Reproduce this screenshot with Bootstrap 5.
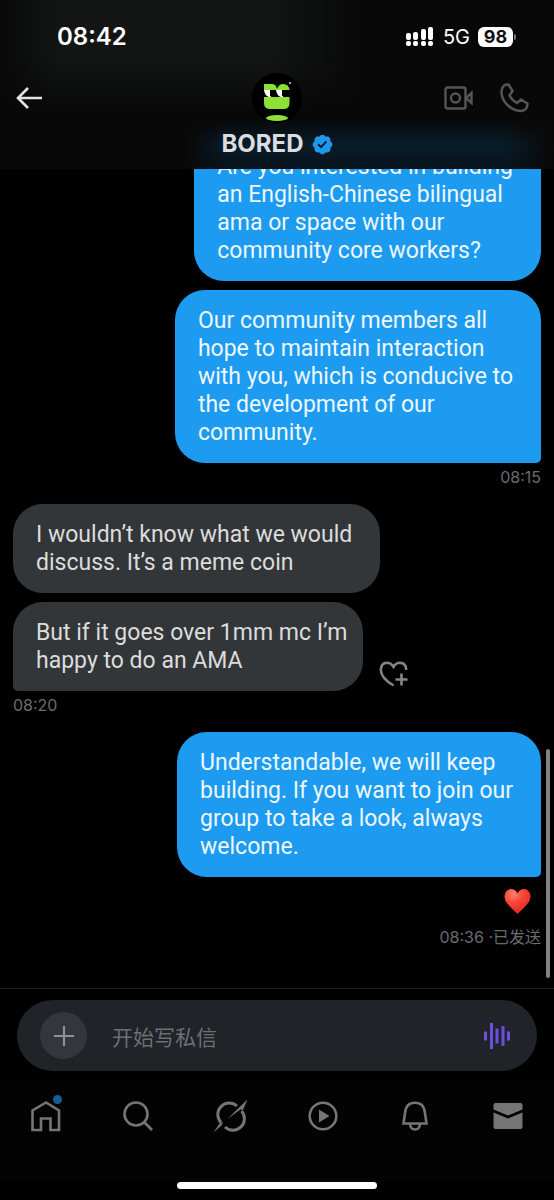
<!DOCTYPE html>
<html lang="zh-CN" data-bs-theme="dark">
<head>
<meta charset="utf-8">
<meta name="viewport" content="width=device-width, initial-scale=1">
<title>BORED</title>
<link href="https://cdn.jsdelivr.net/npm/bootstrap@5.3.0/dist/css/bootstrap.min.css" rel="stylesheet">
<style>
  body { background: #000; font-family: Roboto, "Noto Sans CJK SC", sans-serif; }
  .app { height: 100vh; }
  .icon { display: block; fill: none; stroke: currentColor; }
  .plain { border: 0; background: none; padding: 0; color: inherit; display: block; }

  .top-area {
    height: 169px;
    background:
      linear-gradient(90deg, #080808 0, transparent 60px),
      linear-gradient(270deg, #080808 190px, transparent 290px),
      linear-gradient(180deg, #131514 0, #131514 60px, #080808 110px);
  }
  .top-area::before {
    content: ""; position: absolute; left: 186px; right: 0; bottom: 0; height: 50px;
    background: linear-gradient(90deg, #080808, transparent 40px, transparent calc(100% - 50px), #080808),
      linear-gradient(180deg, #080808, #091c2a 26px, #09131b);
  }
  .status-bar { height: 74px; padding: 0 38px 0 57px; color: #fff; font-family: Inter, sans-serif; }
  .clock { font-size: 24px; font-weight: 600; line-height: 28px; }
  .network { font-size: 20px; line-height: 24px; }
  .battery { background: #fff; color: #111; border-radius: 6px; font-size: 18px; font-weight: 700; line-height: 20px; width: 35px; }
  .battery-tip { width: 2px; height: 6px; background: #777; margin-left: 1px; border-radius: 0 2px 2px 0; }
  .title-bar { height: 48px; padding: 0 16px; color: #e4e4e4; }
  .calls { color: #555; gap: 27px; }
  .calls button:last-child { margin-right: 9px; }
  .side { flex: 1 1 0; }
  .peer { font-family: Inter, sans-serif; font-size: 24px; font-weight: 700; line-height: 28px; color: #dcdde0; padding-top: 8px; }

  .chat { padding: 0 13px 41px; min-height: 0; }
  .bubble { font-size: 23px; line-height: 28px; padding: 17px 28px 16px 23px; border-radius: 30px; margin-bottom: 9px; flex-shrink: 0; }
  .sent { background: #1d9bf0; color: #edf7fe; align-self: flex-end; }
  .received { background: #333639; color: #dcdcdc; align-self: flex-start; }
  .sent-last { border-bottom-right-radius: 5px; margin-bottom: 0; }
  .received-last { border-bottom-left-radius: 5px; margin-bottom: 0; padding-right: 15px; }
  .react { color: #858585; }
  .stamp { font-family: Inter, "Noto Sans CJK SC", sans-serif; font-size: 16px; line-height: 20px; color: #696c70; margin: 4px 0 17px; flex-shrink: 0; }
  .heart { margin: 11px 10px 8px; }
  .scroll-mark { position: absolute; right: 4px; bottom: 10px; width: 4px; height: 28%; border-radius: 2px; background: #808080; }

  .composer { border-top: 1px solid #1d1f20; padding: 11px 17px 10px; }
  .pill { background: #202327; border-radius: 36px; height: 71px; padding: 0 26px 0 23px; }
  .add { width: 47px; height: 47px; border-radius: 50%; background: #33363b; color: #909295; }
  .voice { color: #6b50e0; }
  .pill input { min-width: 0; border: 0; outline: 0; background: none; color: #ddd; font-size: 21px; line-height: 28px; padding: 0; margin-left: 25px; font-family: "Noto Sans CJK SC", sans-serif; }
  .pill input::placeholder { color: #6c7074; opacity: 1; }

  .tabs { height: 101px; background: #030303; color: #757575; padding-top: 16px; }
  .tabs a { color: inherit; flex: 1 1 0; }
  .dot { position: absolute; width: 9px; height: 9px; border-radius: 50%; background: #165d90; right: 3px; top: -2px; }
  .bottom-edge { padding-bottom: 11px; }
  .home-mark { width: 36%; height: 7px; border-radius: 4px; background: #fff; }
</style>
</head>
<body>
<div class="app d-flex flex-column overflow-hidden">
  <header class="top-area position-relative flex-shrink-0">
    <div class="status-bar d-flex align-items-center justify-content-between position-relative">
      <span class="clock">08:42</span>
      <div class="d-flex align-items-center">
        <svg class="me-2" width="30" height="20" viewBox="0 0 30 20" fill="#fff" aria-hidden="true">
          <rect x="1" y="6" width="5" height="7" rx="2"/><rect x="8" y="5" width="5" height="8" rx="2"/><rect x="16" y="2" width="5" height="11" rx="2"/><rect x="23" y="0" width="5" height="13" rx="2"/>
          <rect x="1" y="14" width="5" height="5" rx="2"/><rect x="8" y="14" width="5" height="5" rx="2"/><rect x="16" y="14" width="5" height="5" rx="2"/><rect x="23" y="14" width="5" height="5" rx="2"/>
        </svg>
        <span class="network me-2">5G</span>
        <span class="battery text-center">98</span><span class="battery-tip"></span>
      </div>
    </div>
    <div class="title-bar d-flex align-items-center position-relative">
      <div class="side">
        <button class="plain" type="button" aria-label="返回">
          <svg class="icon" width="27" height="24" viewBox="0 0 27 24" stroke-width="2.6"><path d="M26 12H2.500M12 2 2 12l10 10"/></svg>
        </button>
      </div>
      <svg width="50" height="50" viewBox="0 0 50 50" aria-hidden="true">
        <circle cx="25" cy="25" r="25" fill="#000"/>
        <path fill="#8be234" d="M12 11h8q4 0 5 5 2-5 6-5 6 0 6.500 6H12zM12 24h25.500v6q0 6-6 6H18q-6 0-6-6z"/>
        <ellipse cx="25" cy="45" rx="11" ry="3" fill="#8be234"/>
        <path fill="#fff" d="M12 17h7v7h-2q-4-1-5-7zM24 17h7v7h-2q-4-1-5-7z"/>
        <path fill="#000" d="M18 17h6v6h-6zM30 17h8v6h-8z"/>
        <circle cx="38" cy="10" r="1" fill="#ddd"/>
      </svg>
      <div class="side d-flex justify-content-end align-items-center calls">
        <button class="plain" type="button" aria-label="视频通话">
          <svg class="icon" width="29" height="24" viewBox="0 0 29 24" stroke-width="2.4"><rect x="1.500" y="1.500" width="20" height="21" rx="2"/><circle cx="11.500" cy="12" r="4.500"/><path d="m22 12 5.500-5v10z"/></svg>
        </button>
        <button class="plain" type="button" aria-label="语音通话">
          <svg class="icon" width="29" height="30" viewBox="0 0 29 30" stroke-width="2.500" stroke-linejoin="round"><path d="M5.500 1.800 8.500 1.500 12.500 8 9.500 12.500Q12 17.500 17 20l4-3.500 6.500 4-.5 3.500q-2 4-6.500 4Q12 27.500 6 20.500 0 13 2 6q1-3.500 3.500-4.200z"/></svg>
        </button>
      </div>
    </div>
    <h1 class="peer d-flex justify-content-center align-items-center position-relative m-0">BORED
      <svg class="ms-2" width="21" height="21" viewBox="1 1 20 20" role="img" aria-label="已认证"><circle cx="11" cy="11" r="6" fill="#0a1a26"/><path fill="#2196ed" d="M20.396 11c-.018-.646-.215-1.275-.57-1.816-.354-.54-.852-.972-1.438-1.246.223-.607.27-1.264.14-1.897-.131-.634-.437-1.218-.882-1.687-.47-.445-1.053-.75-1.687-.882-.633-.13-1.29-.083-1.897.14-.273-.587-.704-1.086-1.245-1.44S11.647 1.62 11 1.604c-.646.017-1.273.213-1.813.568s-.969.854-1.24 1.44c-.608-.223-1.267-.272-1.902-.14-.635.13-1.22.436-1.69.882-.445.47-.749 1.055-.878 1.688-.13.633-.08 1.29.144 1.896-.587.274-1.087.705-1.443 1.245-.356.54-.555 1.17-.574 1.817.02.647.218 1.276.574 1.817.356.54.856.972 1.443 1.245-.224.606-.274 1.263-.144 1.896.13.634.433 1.218.877 1.688.47.443 1.054.747 1.687.878.633.132 1.29.084 1.897-.136.274.586.705 1.084 1.246 1.439.54.354 1.17.551 1.816.569.647-.016 1.276-.213 1.817-.567s.972-.854 1.245-1.44c.604.239 1.266.296 1.903.164.636-.132 1.22-.447 1.68-.907.46-.46.776-1.044.908-1.681s.075-1.299-.165-1.903c.586-.274 1.084-.705 1.439-1.246.354-.54.551-1.17.569-1.816zM9.662 14.85l-3.429-3.428 1.293-1.302 2.072 2.072 4.4-4.794 1.347 1.246z"/></svg>
    </h1>
  </header>

  <main class="chat flex-grow-1 d-flex flex-column justify-content-end overflow-hidden position-relative">
    <div class="bubble sent">Are you interested in building<br>an English-Chinese bilingual<br>ama or space with our<br>community core workers?</div>
    <div class="bubble sent sent-last">Our community members all<br>hope to maintain interaction<br>with you, which is conducive to<br>the development of our<br>community.</div>
    <div class="stamp text-end">08:15</div>
    <div class="bubble received">I wouldn’t know what we would<br>discuss. It’s a meme coin</div>
    <div class="d-flex align-items-end flex-shrink-0">
      <div class="bubble received received-last">But if it goes over 1mm mc I’m<br>happy to do an AMA</div>
      <button class="plain react ms-3 mb-1" type="button" aria-label="添加回应">
        <svg class="icon" width="29" height="26" viewBox="0 0 29 26" stroke-width="2.600"><path d="M14.500 24.500Q2 17 1.800 9 2 2 8 1.800q4 0 6.500 4 2.500-4 6.500-4 6 .2 6.300 7.200M22.500 12.500v12M16.500 18.500h12"/></svg>
      </button>
    </div>
    <div class="stamp">08:20</div>
    <div class="bubble sent sent-last">Understandable, we will keep<br>building. If you want to join our<br>group to take a look, always<br>welcome.</div>
    <svg class="align-self-end flex-shrink-0 heart" width="27" height="27" viewBox="0 0 27 27" role="img" aria-label="红心">
      <defs><radialGradient id="hg" cx=".35" cy=".2" r=".9"><stop offset="0" stop-color="#ff8372"/><stop offset=".35" stop-color="#fb4a3c"/><stop offset="1" stop-color="#e01f1c"/></radialGradient></defs>
      <path fill="url(#hg)" d="M13.500 26Q8 21 4 16.500 0 12 .5 7.500 1.500 1.500 7 1q4.500 0 6.500 4.500Q15.500 1 20 1q5.500.5 6.500 6.500.5 4.500-3.500 9Q19 21 13.500 26z"/>
    </svg>
    <div class="stamp text-end mb-0">08:36 ·已发送</div>
    <div class="scroll-mark"></div>
  </main>

  <form class="composer flex-shrink-0" onsubmit="return false">
    <div class="pill d-flex align-items-center">
      <button class="plain add d-flex align-items-center justify-content-center flex-shrink-0" type="button" aria-label="添加">
        <svg class="icon" width="20" height="20" viewBox="0 0 20 20" stroke-width="2.200"><path d="M10 0v20M0 10h20"/></svg>
      </button>
      <input class="flex-grow-1" type="text" aria-label="开始写私信" placeholder="开始写私信">
      <button class="plain voice flex-shrink-0" type="button" aria-label="语音消息">
        <svg class="icon" width="28" height="28" viewBox="0 0 28 28" stroke-width="3"><path d="M2.500 9.500v9M8.500 1v26M14 6.500v15M20 4v20M25.500 9.500v9"/></svg>
      </button>
    </div>
  </form>

  <footer class="bottom-edge flex-shrink-0">
    <nav class="tabs d-flex align-items-start">
      <a href="#" class="d-flex justify-content-center" aria-label="主页"><span class="position-relative"><svg class="icon" width="38" height="38" viewBox="0 0 38 38" stroke-width="2.600"><path d="M19 5.500 5.500 13.500v19.500h8.500V21.500h9.500V33H32V13.500z"/></svg><span class="dot"></span></span></a>
      <a href="#" class="d-flex justify-content-center" aria-label="搜索"><svg class="icon" width="38" height="38" viewBox="0 0 38 38" stroke-width="2.600"><circle cx="17" cy="17" r="11.500"/><path d="m25 25 8 8"/></svg></a>
      <a href="#" class="d-flex justify-content-center" aria-label="Grok"><svg class="icon" width="38" height="38" viewBox="0 0 38 38" stroke-width="3"><path d="M9 25.500A11.500 11.500 0 0 1 25 9M29.500 14A11.500 11.500 0 0 1 13 30"/><path fill="currentColor" stroke="none" d="M15.500 22 27.500 10 35.500 2.500 31 13 28.500 12.500z"/><path fill="currentColor" stroke="none" d="M1.500 35.500 7.500 26.500 11 25l-1 3z"/></svg></a>
      <a href="#" class="d-flex justify-content-center" aria-label="视频"><svg class="icon" width="38" height="38" viewBox="0 0 38 38" stroke-width="2.600"><circle cx="19" cy="19" r="13.300"/><path fill="currentColor" stroke="none" d="m15 12.500 10.500 6.500L15 25.500z"/></svg></a>
      <a href="#" class="d-flex justify-content-center" aria-label="通知"><svg class="icon" width="38" height="38" viewBox="0 0 38 38" stroke-width="2.600"><path d="M7.500 26.500 9 16Q10 5.800 19 5.800T29 16l1.500 10.500zM14 27q.5 5.500 5 5.500t5-5.500"/></svg></a>
      <a href="#" class="d-flex justify-content-center" aria-label="私信"><svg class="icon" width="38" height="38" viewBox="0 0 38 38"><path fill="currentColor" stroke="none" d="M4.500 8q0-2 2-2h25q2 0 2 2v4.500L19 18.500 4.500 12.500zM4.500 15.500 19 21.500l14.500-6V30q0 2-2 2h-25q-2 0-2-2z"/></svg></a>
    </nav>
    <div class="home-mark mx-auto"></div>
  </footer>
</div>
<script src="https://cdn.jsdelivr.net/npm/bootstrap@5.3.0/dist/js/bootstrap.bundle.min.js"></script>
</body>
</html>
